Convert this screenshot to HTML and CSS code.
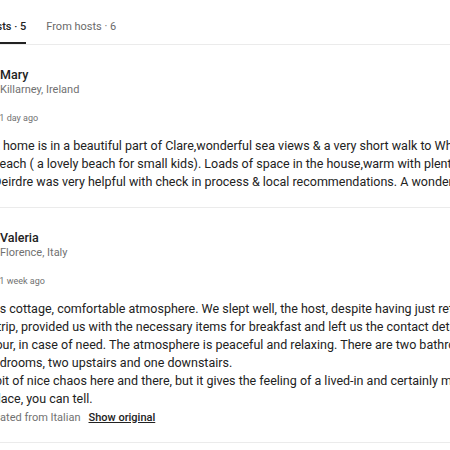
FILE: index.html
```html
<!DOCTYPE html>
<html lang="en">
<head>
    <meta charset="UTF-8">
    <meta name="viewport" content="width=device-width, initial-scale=1.0">
    <title>Reviews</title>
    <link rel="stylesheet" href="styles.css">
</head>
<body>

<div id="reviews-panel">
    <div class="tabs">
        <button class="tab active">From guests · 5</button>
        <button class="tab">From hosts · 6</button>
    </div>

    <div class="review">
        <div class="reviewer">
            <div class="avatar">M</div>
            <div>
                <div class="name">Mary</div>
                <div class="location">Killarney, Ireland</div>
            </div>
        </div>
        <div class="meta">
            <svg class="stars" width="39" height="7" viewBox="0 0 39 7">
                <g fill="#222">
                    <polygon points="3.5,0 4.4,2.4 7,2.6 5,4.3 5.6,7 3.5,5.5 1.4,7 2,4.3 0,2.6 2.6,2.4"/>
                    <polygon transform="translate(8 0)" points="3.5,0 4.4,2.4 7,2.6 5,4.3 5.6,7 3.5,5.5 1.4,7 2,4.3 0,2.6 2.6,2.4"/>
                    <polygon transform="translate(16 0)" points="3.5,0 4.4,2.4 7,2.6 5,4.3 5.6,7 3.5,5.5 1.4,7 2,4.3 0,2.6 2.6,2.4"/>
                    <polygon transform="translate(24 0)" points="3.5,0 4.4,2.4 7,2.6 5,4.3 5.6,7 3.5,5.5 1.4,7 2,4.3 0,2.6 2.6,2.4"/>
                    <polygon transform="translate(32 0)" points="3.5,0 4.4,2.4 7,2.6 5,4.3 5.6,7 3.5,5.5 1.4,7 2,4.3 0,2.6 2.6,2.4"/>
                </g>
            </svg>
            <span>·</span>
            <span>1 day ago</span>
        </div>
        <p class="review-text">The quiet home is in a beautiful part of Clare,wonderful sea views &amp; a very short walk to White Strand<br>and the beach ( a lovely beach for small kids). Loads of space in the house,warm with plenty<br>of heat. Deirdre was very helpful with check in process &amp; local recommendations. A wonderful stay!</p>
    </div>

    <div class="review">
        <div class="reviewer">
            <div class="avatar">V</div>
            <div>
                <div class="name">Valeria</div>
                <div class="location">Florence, Italy</div>
            </div>
        </div>
        <div class="meta">
            <svg class="stars" width="39" height="7" viewBox="0 0 39 7">
                <g fill="#222">
                    <polygon points="3.5,0 4.4,2.4 7,2.6 5,4.3 5.6,7 3.5,5.5 1.4,7 2,4.3 0,2.6 2.6,2.4"/>
                    <polygon transform="translate(8 0)" points="3.5,0 4.4,2.4 7,2.6 5,4.3 5.6,7 3.5,5.5 1.4,7 2,4.3 0,2.6 2.6,2.4"/>
                    <polygon transform="translate(16 0)" points="3.5,0 4.4,2.4 7,2.6 5,4.3 5.6,7 3.5,5.5 1.4,7 2,4.3 0,2.6 2.6,2.4"/>
                    <polygon transform="translate(24 0)" points="3.5,0 4.4,2.4 7,2.6 5,4.3 5.6,7 3.5,5.5 1.4,7 2,4.3 0,2.6 2.6,2.4"/>
                    <polygon transform="translate(32 0)" points="3.5,0 4.4,2.4 7,2.6 5,4.3 5.6,7 3.5,5.5 1.4,7 2,4.3 0,2.6 2.6,2.4"/>
                </g>
            </svg>
            <span>·</span>
            <span>1 week ago</span>
        </div>
        <p class="review-text">Marvelous cottage, comfortable atmosphere. We slept well, the host, despite having just returned<br>from his trip, provided us with the necessary items for breakfast and left us the contact details of<br>a neighbour, in case of need. The atmosphere is peaceful and relaxing. There are two bathrooms and three<br>comfy bedrooms, two upstairs and one downstairs.<br>Surely a bit of nice chaos here and there, but it gives the feeling of a lived-in and certainly more<br>special place, you can tell.</p>
        <div class="translation">
            <svg width="16" height="16" viewBox="0 0 16 16" fill="none" stroke="#717171" stroke-width="1.2">
                <path d="M2 3h7M5.5 1.5V3M4 3c.6 2.4 2 4.2 4 5.2M7.5 3C7 5.5 5 7.5 2.5 8.5"/>
                <path d="M8.5 14.5l3-7 3 7M9.6 12h3.8"/>
            </svg>
            <span>Translated from Italian</span>
            <a href="#" class="show-original">Show original</a>
        </div>
    </div>
</div>

</body>
</html>
```

FILE: styles.css
```css
html, body {
    overflow: hidden;
}

body {
    font-family: 'Roboto', 'Liberation Sans', sans-serif;
    color: #222222;
    background-color: #ffffff;
    margin: 0;
    padding: 0;
}

#reviews-panel {
    width: 680px;
    margin-left: -52px;
}

.tabs {
    display: flex;
    gap: 20px;
    padding-left: 2px;
    border-bottom: 1px solid #ebebeb;
}

.tab {
    font-family: inherit;
    font-size: 11px;
    line-height: 14px;
    color: #6a6a6a;
    background: none;
    border: none;
    padding: 20px 0 10px;
    cursor: pointer;
}

.tab.active {
    color: #222222;
    font-weight: 500;
    box-shadow: inset 0 -2px 0 #222222;
}

.review {
    padding: 17px 0 16.5px;
    border-bottom: 1px solid #ebebeb;
}

.reviewer {
    display: flex;
    align-items: center;
    gap: 12px;
}

.avatar {
    width: 40px;
    height: 40px;
    border-radius: 50%;
    background-color: #484848;
    color: white;
    font-size: 16px;
    display: flex;
    align-items: center;
    justify-content: center;
}

.name {
    font-size: 12.5px;
    line-height: 15px;
    font-weight: 500;
}

.location {
    font-size: 11px;
    line-height: 15px;
    color: #717171;
}

.meta {
    display: flex;
    align-items: center;
    gap: 5px;
    margin-top: 9.5px;
    font-size: 9px;
    line-height: 12px;
    color: #717171;
}

.review-text {
    font-size: 12.5px;
    line-height: 18px;
    margin: 13px 0 0;
}

.translation {
    display: flex;
    align-items: center;
    gap: 6px;
    margin-top: 2px;
    font-size: 11px;
    line-height: 16px;
    color: #717171;
}

.show-original {
    color: #222222;
    font-weight: 500;
    margin-left: 2px;
}
```
